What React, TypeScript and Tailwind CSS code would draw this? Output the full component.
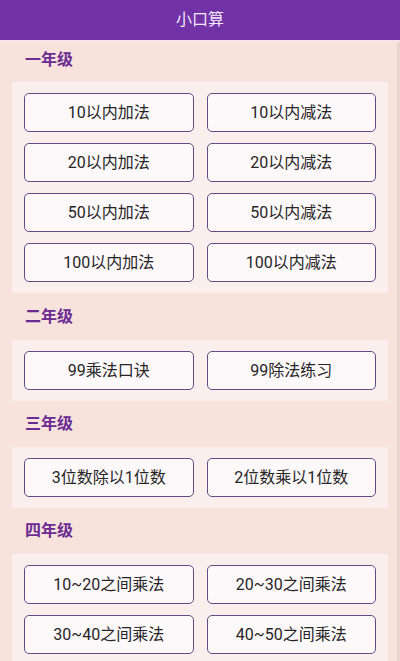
const GRADES: { title: string; items: string[] }[] = [
  {
    title: "一年级",
    items: [
      "10以内加法",
      "10以内减法",
      "20以内加法",
      "20以内减法",
      "50以内加法",
      "50以内减法",
      "100以内加法",
      "100以内减法",
    ],
  },
  { title: "二年级", items: ["99乘法口诀", "99除法练习"] },
  { title: "三年级", items: ["3位数除以1位数", "2位数乘以1位数"] },
  {
    title: "四年级",
    items: ["10~20之间乘法", "20~30之间乘法", "30~40之间乘法", "40~50之间乘法"],
  },
];

export default function App() {
  return (
    <div
      className="w-[400px] h-[661px] overflow-hidden bg-[#f7e2dc] flex flex-col"
      style={{ fontFamily: 'Roboto, "Noto Sans CJK SC", sans-serif' }}
    >
      {/* 标题栏 */}
      <header className="h-[40px] shrink-0 bg-[#7131a7] flex items-center justify-center text-[16px] text-[#f3e9f7]">
        小口算
      </header>
      <div className="h-[2px] shrink-0 bg-[#fbe3ee]" />

      <div className="flex flex-1">
        <main className="flex-1 pl-[12px] pr-[9px]">
          {GRADES.map((grade, i) => (
            <section key={grade.title}>
              <h2
                className={`${
                  i === 0 ? "h-[40px] pb-[5px]" : i === 1 ? "h-[47px]" : "h-[46px]"
                } flex items-center pl-[13px] text-[16px] font-semibold text-[#6a2b93]`}
              >
                {grade.title}
              </h2>
              <div className="bg-[#fbefed] px-[12px] py-[11px] grid grid-cols-2 gap-x-[13px] gap-y-[11px]">
                {grade.items.map((item) => (
                  <button
                    key={item}
                    className="h-[39px] rounded-[5px] border-[1.5px] border-[#654a86] bg-[#fdf8fa] text-[16px] text-[#262626]"
                  >
                    {item}
                  </button>
                ))}
              </div>
            </section>
          ))}
        </main>
        <div className="w-[3px] shrink-0 bg-[#ead4cf]" />
      </div>
    </div>
  );
}
